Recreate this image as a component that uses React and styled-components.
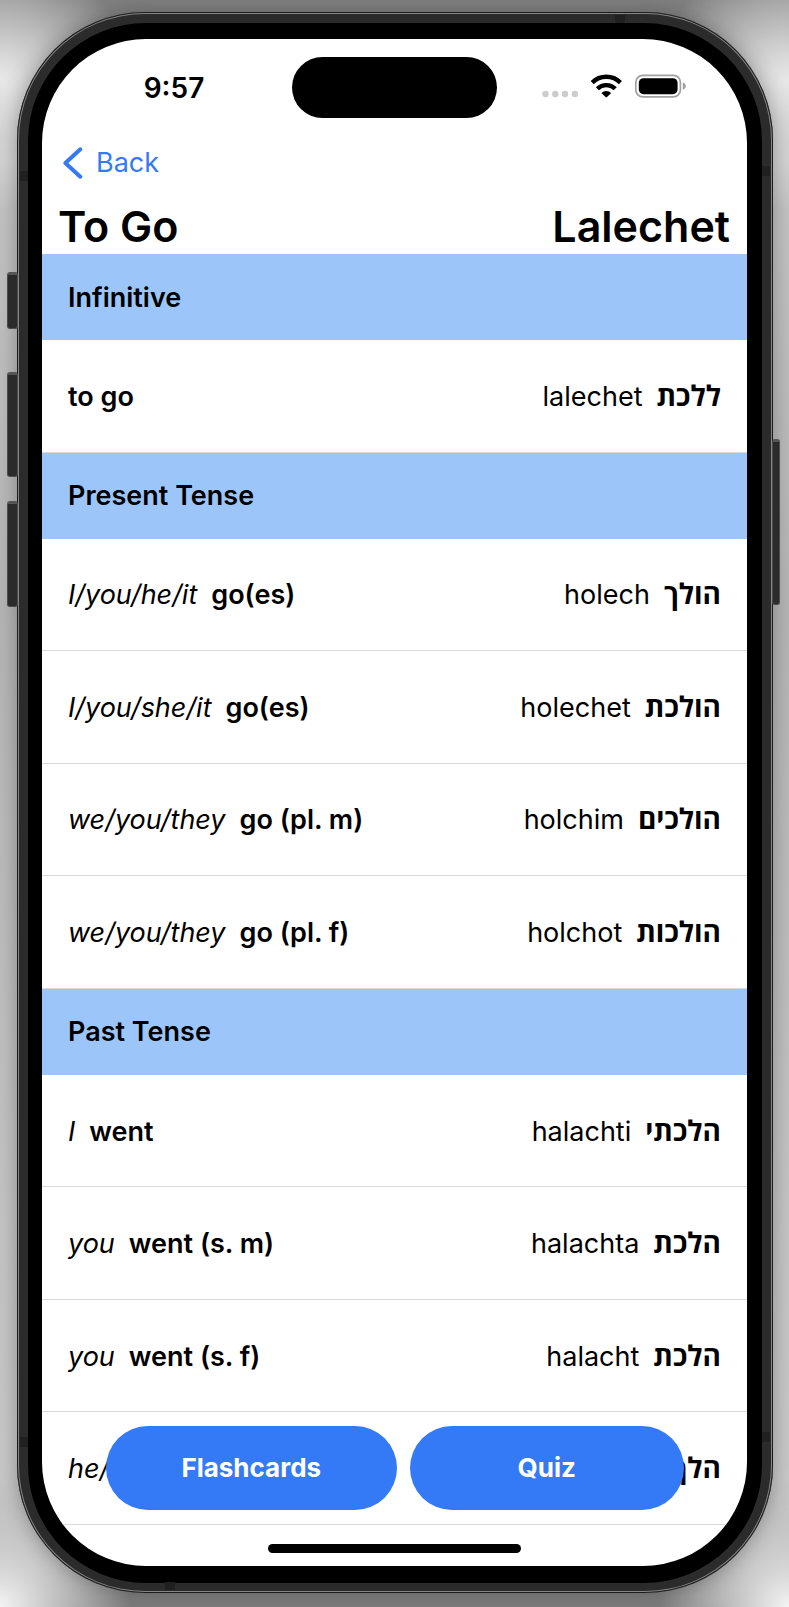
import React from "react";
import styled, { createGlobalStyle, css } from "styled-components";

const ink = "#000000";
const blue = "#347af6";
const band = "#9cc6fa";
const rule = "#d9d9db";

const GlobalStyle = createGlobalStyle`
  * { box-sizing: border-box; }
  body {
    margin: 0;
    background: #ffffff;
    color: ${ink};
    font-family: Inter, "Open Sans", "Liberation Sans", sans-serif;
    font-size: 27px;
    line-height: 36px;
  }
`;

const Stage = styled.div`
  min-height: 100vh;
  display: flex;
  padding: 12px 16px 14px 17px;
  overflow: hidden;
  background:
    radial-gradient(circle at 0 80px, rgba(240, 240, 240, 0.9), rgba(240, 240, 240, 0) 130px),
    radial-gradient(circle at 100% 80px, rgba(240, 240, 240, 0.9), rgba(240, 240, 240, 0) 130px),
    radial-gradient(circle at 0 100%, #f4f4f4, rgba(240, 240, 240, 0) 130px),
    radial-gradient(circle at 100% 100%, #f4f4f4, rgba(240, 240, 240, 0) 130px),
    linear-gradient(
      #808080,
      #888888 30px,
      #c4c4c4 160px,
      #b4b4b4 600px,
      #c4c4c4 75%,
      #c8c8c8 calc(100% - 130px),
      #888888 calc(100% - 30px),
      #7c7c7c
    );
`;

const Frame = styled.div`
  position: relative;
  flex: 1;
  min-width: 0;
  display: flex;
  padding: 11px 11px 10px;
  border-radius: 128px;
  background: #2b2b2b;
  box-shadow:
    inset 0 0 0 1px #1c1c1c,
    inset 0 0 0 2px #858585,
    0 0 20px rgba(0, 0, 0, 0.3);
`;

const Bezel = styled.div`
  flex: 1;
  min-width: 0;
  display: flex;
  padding: 16px 15px 17px 14px;
  border-radius: 118px;
  background: #000000;
`;

const Screen = styled.main`
  position: relative;
  flex: 1;
  min-width: 0;
  display: flex;
  flex-direction: column;
  overflow: hidden;
  border-radius: 104px;
  background: #ffffff;
`;

const SideKey = styled.span`
  position: absolute;
  top: ${(p) => p.$top}px;
  ${(p) => (p.$right ? "right: -7px;" : "left: -10px;")}
  width: ${(p) => (p.$right ? 8 : 11)}px;
  height: ${(p) => p.$height}px;
  border: 1px solid #4c4c4c;
  border-top: 3px solid #555555;
  border-radius: 3px;
  background: #2b2b2b;
`;

const Antenna = styled.span`
  position: absolute;
  background: #202020;
  ${(p) =>
    p.$side === "left" || p.$side === "right"
      ? css`width: 8px; height: 10px;`
      : css`width: 10px; height: 8px;`}
  ${(p) => p.$side}: 3px;
  ${(p) => p.$from}: ${(p) => p.$at}px;
`;

const StatusBar = styled.div`
  display: grid;
  grid-template-columns: 1fr 205px 1fr;
  align-items: center;
  padding-top: 18px;
`;

const Clock = styled.time`
  padding-left: 14px;
  text-align: center;
  font-size: 28px;
  font-weight: 600;
`;

const Island = styled.div`
  height: 61px;
  border-radius: 31px;
  background: #000000;
`;

const StatusIcons = styled.div`
  display: flex;
  justify-content: center;
  padding: 0 16px 4px 0;
`;

const NavBar = styled.nav`
  display: flex;
  padding: 27px 20px 0;
`;

const BackLink = styled.a`
  display: flex;
  align-items: center;
  gap: 12px;
  color: ${blue};
  text-decoration: none;
`;

const TitleBar = styled.header`
  display: flex;
  justify-content: space-between;
  padding: 17px 17px 0 16px;
`;

const Title = styled.h1`
  margin: 0;
  font-size: 43px;
  line-height: 56px;
  font-weight: 600;
`;

const List = styled.div`
  flex: 1;
  display: flex;
  flex-direction: column;
`;

const Section = styled.section`
  display: flex;
  flex-direction: column;
  flex: ${(p) => p.$count} 0 auto;
`;

const SectionTitle = styled.h2`
  display: flex;
  align-items: center;
  min-height: 86px;
  margin: 0;
  padding: 1px 26px 0;
  background: ${band};
  font-size: 27px;
  font-weight: 600;
`;

const Rows = styled.ul`
  flex: 1;
  display: flex;
  flex-direction: column;
  margin: 0;
  padding: 0;
  list-style: none;
`;

const Row = styled.li`
  flex: 1 0 auto;
  min-height: 112px;
  display: flex;
  align-items: center;
  justify-content: space-between;
  padding: 2px 26px 0;
  border-bottom: 1px solid ${rule};
`;

const Phrase = styled.span`
  display: flex;
  align-items: baseline;
  gap: 14px;
`;

const Pronoun = styled.em`
  font-style: italic;
`;

const Verb = styled.strong`
  font-weight: 600;
`;

const Hebrew = styled.strong`
  font-family: "Open Sans", "Liberation Sans", sans-serif;
  font-size: 28px;
  line-height: 28px;
  font-weight: 700;
`;

const Actions = styled.div`
  position: absolute;
  left: 64px;
  right: 63px;
  bottom: 56px;
  display: flex;
  gap: 13px;
`;

const ActionButton = styled.button`
  flex: 1 1 ${(p) => p.$basis}px;
  height: 84px;
  border: 0;
  border-radius: 42px;
  background: ${blue};
  color: #ffffff;
  font: inherit;
  font-size: 26px;
  font-weight: 700;
`;

const HomeArea = styled.div`
  display: flex;
  justify-content: center;
  padding: 19px 0 13px;
`;

const HomeIndicator = styled.div`
  width: 253px;
  height: 9px;
  border-radius: 5px;
  background: #000000;
`;

const sections = [
  { title: "Infinitive", rows: [{ verb: "to go", latin: "lalechet", hebrew: "ללכת" }] },
  {
    title: "Present Tense",
    rows: [
      { pronoun: "I/you/he/it", verb: "go(es)", latin: "holech", hebrew: "הולך" },
      { pronoun: "I/you/she/it", verb: "go(es)", latin: "holechet", hebrew: "הולכת" },
      { pronoun: "we/you/they", verb: "go (pl. m)", latin: "holchim", hebrew: "הולכים" },
      { pronoun: "we/you/they", verb: "go (pl. f)", latin: "holchot", hebrew: "הולכות" },
    ],
  },
  {
    title: "Past Tense",
    rows: [
      { pronoun: "I", verb: "went", latin: "halachti", hebrew: "הלכתי" },
      { pronoun: "you", verb: "went (s. m)", latin: "halachta", hebrew: "הלכת" },
      { pronoun: "you", verb: "went (s. f)", latin: "halacht", hebrew: "הלכת" },
      { pronoun: "he/it", latin: "halach", hebrew: "הלך" },
    ],
  },
];

function StatusGlyphs() {
  return (
    <svg width="144" height="24" viewBox="0 0 144 24" aria-hidden="true">
      <g fill="#cccccc">
        <circle cx="3.5" cy="20" r="3.2" />
        <circle cx="13.3" cy="20" r="3.2" />
        <circle cx="23" cy="20" r="3.2" />
        <circle cx="32.8" cy="20" r="3.2" />
      </g>
      <g fill="none" stroke="#000000" strokeWidth="4.4">
        <path d="M50.2 8.6 A20 20 0 0 1 78.4 8.6" />
        <path d="M55.4 14.8 A12.5 12.5 0 0 1 73.2 14.8" />
      </g>
      <path d="M59.4 18.9 A7 7 0 0 1 69.2 18.9 L65 23.1 Q64.3 23.7 63.6 23.1 Z" fill="#000000" />
      <rect x="93.8" y="1.3" width="44.6" height="21.6" rx="7" fill="none" stroke="#a0a0a0" strokeWidth="1.7" />
      <rect x="96.8" y="4.2" width="38.8" height="16" rx="4.6" fill="#000000" />
      <path d="M140.8 8.4 Q143.8 9.4 143.8 12.1 Q143.8 14.8 140.8 15.8 Z" fill="#a0a0a0" />
    </svg>
  );
}

function BackChevron() {
  return (
    <svg width="22" height="32" viewBox="0 0 22 32" aria-hidden="true">
      <path
        d="M18.3 2.3 L3.4 16 L18.3 29.7"
        fill="none"
        stroke={blue}
        strokeWidth="4"
        strokeLinecap="round"
        strokeLinejoin="round"
      />
    </svg>
  );
}

export default function App() {
  return (
    <Stage>
      <GlobalStyle />
      <Frame>
        <SideKey $top={260} $height={57} />
        <SideKey $top={360} $height={105} />
        <SideKey $top={489} $height={106} />
        <SideKey $right $top={427} $height={166} />
        <Antenna $side="left" $from="top" $at={159} />
        <Antenna $side="right" $from="top" $at={154} />
        <Antenna $side="top" $from="right" $at={148} />
        <Antenna $side="left" $from="bottom" $at={146} />
        <Antenna $side="right" $from="bottom" $at={151} />
        <Antenna $side="bottom" $from="left" $at={148} />
        <Bezel>
          <Screen>
            <StatusBar>
              <Clock>9:57</Clock>
              <Island />
              <StatusIcons>
                <StatusGlyphs />
              </StatusIcons>
            </StatusBar>
            <NavBar>
              <BackLink href="#back">
                <BackChevron />
                Back
              </BackLink>
            </NavBar>
            <TitleBar>
              <Title>To Go</Title>
              <Title as="p">Lalechet</Title>
            </TitleBar>
            <List>
              {sections.map((section) => (
                <Section key={section.title} $count={section.rows.length}>
                  <SectionTitle>{section.title}</SectionTitle>
                  <Rows>
                    {section.rows.map((row) => (
                      <Row key={row.latin}>
                        <Phrase>
                          {row.pronoun && <Pronoun>{row.pronoun}</Pronoun>}
                          {row.verb && <Verb>{row.verb}</Verb>}
                        </Phrase>
                        <Phrase>
                          <span>{row.latin}</span>
                          <Hebrew lang="he" dir="rtl">{row.hebrew}</Hebrew>
                        </Phrase>
                      </Row>
                    ))}
                  </Rows>
                </Section>
              ))}
            </List>
            <Actions>
              <ActionButton type="button" $basis={156}>Flashcards</ActionButton>
              <ActionButton type="button" $basis={140}>Quiz</ActionButton>
            </Actions>
            <HomeArea>
              <HomeIndicator />
            </HomeArea>
          </Screen>
        </Bezel>
      </Frame>
    </Stage>
  );
}
